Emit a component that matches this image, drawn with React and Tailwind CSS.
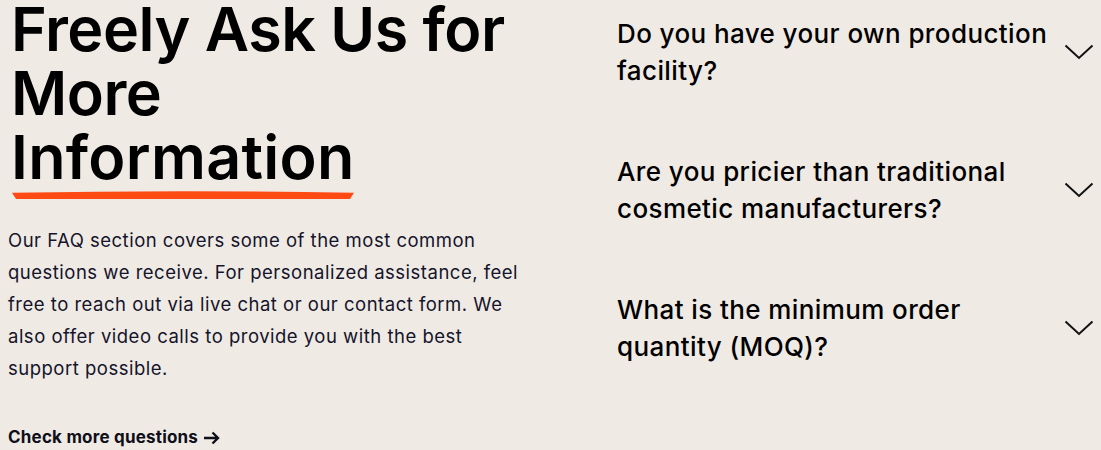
const faqs = [
  "Do you have your own production facility?",
  "Are you pricier than traditional cosmetic manufacturers?",
  "What is the minimum order quantity (MOQ)?",
];

function Chevron() {
  return (
    <svg width="30" height="16" viewBox="0 0 30 16" fill="none" className="shrink-0">
      <path d="M1.5 1.5 L15 14 L28.5 1.5" stroke="#111" strokeWidth="2" />
    </svg>
  );
}

export default function App() {
  return (
    <div className="w-[1101px] h-[450px] overflow-hidden bg-[#efeae4] flex font-['Inter',sans-serif] text-black">
      {/* Left */}
      <div className="w-[540px] shrink-0 pl-2">
        <h2 className="pl-[3px] -mt-[3px] text-[61px] leading-[64px] font-semibold tracking-[-0.5px]">
          Freely Ask Us for
          <br />
          More
          <br />
          <span className="relative inline-block tracking-[0.3px]">
            Information
            <svg
              className="absolute left-[1px] top-[66px]"
              width="342"
              height="9"
              viewBox="0 0 342 9"
              preserveAspectRatio="none"
            >
              <path d="M0 1.8 Q171 -1.2 342 1.8 L338 8 L4 8 Z" fill="#ff4a14" />
            </svg>
          </span>
        </h2>
        <p className="mt-[35px] text-[18.5px] leading-[32px] tracking-[0.5px] text-[#14142b] w-[525px]">
          Our FAQ section covers some of the most common questions we receive. For personalized
          assistance, feel free to reach out via live chat or our contact form. We also offer video
          calls to provide you with the best support possible.
        </p>
        <a href="#" className="mt-[41px] inline-flex items-center gap-[5px] text-[17px] tracking-[0.2px] font-bold text-[#0f0f1a]">
          Check more questions
          <svg width="17" height="14" viewBox="0 0 17 14" fill="none">
            <path d="M1 7 H15 M9.5 1.5 L15 7 L9.5 12.5" stroke="#0f0f1a" strokeWidth="2.4" />
          </svg>
        </a>
      </div>

      {/* Right */}
      <div className="flex-1 ml-[77px] pr-[7px] pt-[15px] flex flex-col gap-[64px]">
        {faqs.map((q) => (
          <div key={q} className="flex items-center justify-between gap-2">
            <h3 className="text-[26px] leading-[37px] font-medium tracking-[0.4px]">{q}</h3>
            <Chevron />
          </div>
        ))}
      </div>
    </div>
  );
}
